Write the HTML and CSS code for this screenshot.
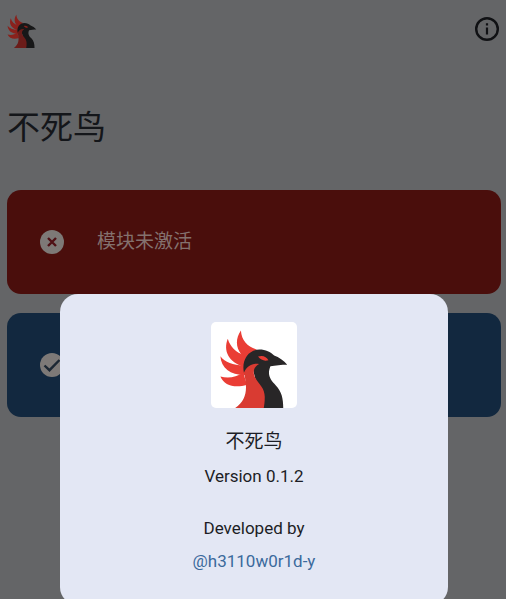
FILE: index.html
```
<!DOCTYPE html>
<html lang="zh-CN">
<head>
  <meta charset="UTF-8" />
  <meta name="viewport" content="width=device-width, initial-scale=1.0"/>
  <title>不死鸟</title>
  <link rel="stylesheet" href="styles.css">
</head>
<body>

<main class="page">
  <header class="top-bar">
    <svg class="brand" viewBox="58 42 208 236" aria-hidden="true">
      <use href="#phoenix"/>
    </svg>
    <button class="info-button" type="button" aria-label="关于">
      <svg viewBox="0 0 24 24" aria-hidden="true">
        <circle cx="12" cy="12" r="10.8" fill="none" stroke="currentColor" stroke-width="2.4"/>
        <path d="M10.9 6.2h2.2v2.2h-2.2zM10.9 10.6h2.2v7h-2.2z" fill="currentColor"/>
      </svg>
    </button>
  </header>

  <h1 class="title">不死鸟</h1>

  <section class="card card-error">
    <svg class="status-icon" viewBox="0 0 24 24" aria-hidden="true">
      <circle cx="12" cy="12" r="12" fill="currentColor"/>
      <path class="mark-error" d="M8 8l8 8M16 8l-8 8"/>
    </svg>
    <span class="status-text">模块未激活</span>
  </section>

  <section class="card card-ok">
    <svg class="status-icon" viewBox="0 0 24 24" aria-hidden="true">
      <circle cx="12" cy="12" r="12" fill="currentColor"/>
      <path class="mark-ok" d="M4.5 12.5l5 4.7L19.5 7"/>
    </svg>
  </section>
</main>

<div class="dialog" role="dialog" aria-labelledby="app-name">
  <svg class="app-icon" viewBox="34 22 256 256" aria-hidden="true">
    <g id="phoenix">
      <!-- crest -->
      <g class="red">
        <path d="M123 47C125 77 143 95 170 104L152 118L136 132L124 118C108 98 106 72 123 47z"/>
        <path d="M84 72C91 96 108 113 134 121L140 140L131 155C88 142 69 109 84 72z"/>
        <path d="M62 124C76 142 99 151 132 151L138 180C92 181 64 159 62 124z"/>
        <path d="M62 184C84 191 108 187 130 173L141 209C105 220 73 211 62 184z"/>
      </g>
      <!-- head and neck -->
      <path class="black" d="M132 173C124 134 146 104 178 104C197 104 211 111 222 122C236 127 251 137 261 149C244 149 225 151 211 154C200 180 211 194 227 211C244 229 249 249 249 278H188L158 160z"/>
      <path class="neck" d="M132 173C140 153 157 144 177 147C160 156 157 174 167 190C178 208 195 220 194 247C194 259 193 269 191 278H106C140 255 144 222 132 173z"/>
      <path class="red" d="M174 125C188 120 199 125 205 136C193 139 182 136 174 125z"/>
    </g>
  </svg>
  <h2 class="app-name" id="app-name">不死鸟</h2>
  <p class="version">Version 0.1.2</p>
  <p class="credit">Developed by</p>
  <a class="author" href="#">@h3110w0r1d-y</a>
</div>

</body>
</html>
```

FILE: styles.css
```
* {
  box-sizing: border-box;
}

body {
  --red: #ea3d35;
  --neck: #d93b32;
  --black: #282627;
  margin: 0;
  min-height: 100vh;
  overflow: hidden;
  background: #646567;
  color: #14161a;
  font-family: Roboto, "Noto Sans CJK SC", sans-serif;
}

.red {
  fill: var(--red);
}

.neck {
  fill: var(--neck);
}

.black {
  fill: var(--black);
}

.page {
  padding: 14px 5px 0 7px;
}

.top-bar {
  display: flex;
  justify-content: space-between;
  align-items: flex-start;
}

.brand {
  --red: #8a211c;
  --neck: #6b1c19;
  --black: #171718;
  width: 30px;
  height: 34px;
}

.info-button {
  width: 24px;
  height: 24px;
  margin: 3px 2px 0 0;
  padding: 0;
  border: 0;
  background: none;
  color: #101114;
}

.info-button svg {
  display: block;
}

.title {
  margin: 56px 0 38px;
  font-size: 33px;
  font-weight: 400;
  line-height: 48px;
}

.card {
  display: flex;
  align-items: center;
  gap: 33px;
  height: 104px;
  margin-bottom: 19px;
  padding: 0 33px;
  border-radius: 14px;
  color: #84716e;
}

.card-error {
  background: #4a0e0c;
}

.card-ok {
  background: #12283f;
}

.status-icon {
  width: 24px;
  height: 24px;
  color: #7d7977;
}

.status-text {
  font-size: 19px;
  line-height: 26px;
}

.mark-error,
.mark-ok {
  fill: none;
  stroke-width: 2.4;
}

.mark-error {
  stroke: #4f1015;
}

.mark-ok {
  stroke: #1c2733;
}

.dialog {
  position: absolute;
  top: 294px;
  left: 60px;
  right: 58px;
  display: flex;
  flex-direction: column;
  align-items: center;
  padding: 28px 24px 32px;
  border-radius: 18px;
  background: #e3e7f4;
  color: #1c1d25;
  font-size: 17px;
  line-height: 24px;
}

.app-icon {
  width: 86px;
  height: 86px;
  border-radius: 5px;
  background: #fff;
}

.app-name {
  margin: 22px 0 10px;
  font-size: 19px;
  font-weight: 400;
  line-height: 24px;
}

.version {
  margin: 0 0 28px;
}

.credit {
  margin: 0 0 9px;
}

.author {
  color: #3b6a9c;
  text-decoration: none;
}
```
